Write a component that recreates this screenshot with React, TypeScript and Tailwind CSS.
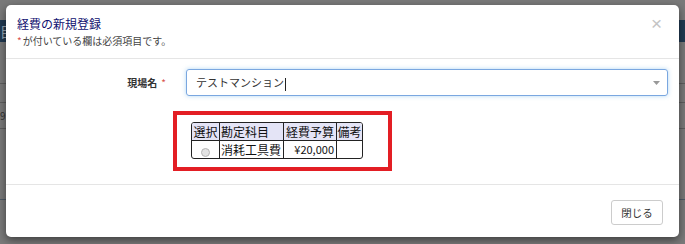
import React from "react";

const jp = { fontFamily: '"Noto Sans CJK JP", "Noto Sans", sans-serif' };

export default function App() {
  return (
    <div className="relative w-[685px] h-[244px] overflow-hidden bg-[#7a7a7a]" style={jp}>
      {/* dimmed page behind */}
      <div className="flex flex-col w-full">
        <div className="h-[20px]" />
        <div className="h-[22px] bg-[#213a52] text-[#9aa7b4] text-[14px] leading-[22px] pl-0">目</div>
        <div className="h-[41px]" />
        <div className="h-px bg-[#5e5e5e]" />
        <div className="h-[18px]" />
        <div className="h-px bg-[#5e5e5e]" />
        <div className="h-[25px] text-[10px] leading-[25px] text-[#333] pl-0">9</div>
        <div className="h-px bg-[#5e5e5e]" />
        <div className="h-[70px]" />
        <div className="h-px bg-[#4e5a66]" />
      </div>

      {/* modal */}
      <div className="absolute left-[6px] top-[5px] w-[673px] h-[232px] bg-white rounded-[5px] shadow-[0_3px_9px_rgba(0,0,0,0.5)] flex flex-col">
        <div className="h-[54px] border-b border-[#e5e5e5] flex justify-between px-[11px] pt-[11px]">
          <div className="flex flex-col gap-[2px]">
            <div className="text-[12px] leading-[16px] text-[#101070]">経費の新規登録</div>
            <div className="text-[10px] leading-[14px] text-[#444] flex">
              <span className="text-[#d9534f] mr-[1px]">*</span>
              <span>が付いている欄は必須項目です。</span>
            </div>
          </div>
          <div className="text-[#c4c4c4] text-[19px] leading-[16px] mr-[6px] font-['Liberation_Sans']">×</div>
        </div>

        <div className="h-[126px] border-b border-[#e5e5e5] flex flex-col pt-[10px]">
          <div className="flex items-center">
            <div className="w-[160px] flex justify-end items-center text-[10px] font-bold text-[#333]">
              <span>現場名</span>
              <span className="text-[#d9534f] ml-[4px] font-normal">*</span>
            </div>
            <div className="ml-[20px] w-[482px] h-[27px] border border-[#7aa7e0] rounded-[3px] shadow-[0_0_4px_rgba(102,175,233,0.5)] flex items-center justify-between pl-[9px] pr-[7px]">
              <span className="text-[11px] text-[#333]">テストマンション<span className="inline-block w-px h-[13px] bg-[#222] align-middle ml-[1px]" /></span>
              <svg width="7" height="4" viewBox="0 0 7 4"><path d="M0 0h7L3.5 4z" fill="#999" /></svg>
            </div>
          </div>
          <div className="mt-[15px] ml-[167px] w-[219px] h-[60px] border-4 border-[#e31e24] pl-[14px] pt-[7px]">
            <div className="w-[172px] border border-[#222] rounded-[3px] overflow-hidden">
              <table className="border-separate border-spacing-0 text-[12px] text-[#111] leading-[17px]">
                <thead>
                  <tr className="bg-[#e4e4f6]">
                    <th className="w-[28px] border-r border-b border-[#222] font-normal p-0 text-center">選択</th>
                    <th className="w-[64px] border-r border-b border-[#222] font-normal p-0 text-left pl-[1px]">勘定科目</th>
                    <th className="w-[53px] border-r border-b border-[#222] font-normal p-0 text-center">経費予算</th>
                    <th className="w-[25px] border-b border-[#222] font-normal p-0 text-center">備考</th>
                  </tr>
                </thead>
                <tbody>
                  <tr>
                    <td className="border-r border-[#222] p-0 text-center h-[17px]">
                      <span className="inline-block w-[9px] h-[9px] rounded-full border border-[#b5b5b5] bg-[#e2e2e2] align-middle mt-[2px]" />
                    </td>
                    <td className="border-r border-[#222] p-0 pl-[1px]">消耗工具費</td>
                    <td className="border-r border-[#222] p-0 text-right pr-[2px] text-[11px]">¥20,000</td>
                    <td className="p-0" />
                  </tr>
                </tbody>
              </table>
            </div>
          </div>
        </div>

        <div className="flex-1 flex justify-end items-start pt-[15px] pr-[16px]">
          <div className="w-[52px] h-[25px] border border-[#ccc] rounded-[3px] flex items-center justify-center text-[10.5px] text-[#333]">閉じる</div>
        </div>
      </div>
    </div>
  );
}
